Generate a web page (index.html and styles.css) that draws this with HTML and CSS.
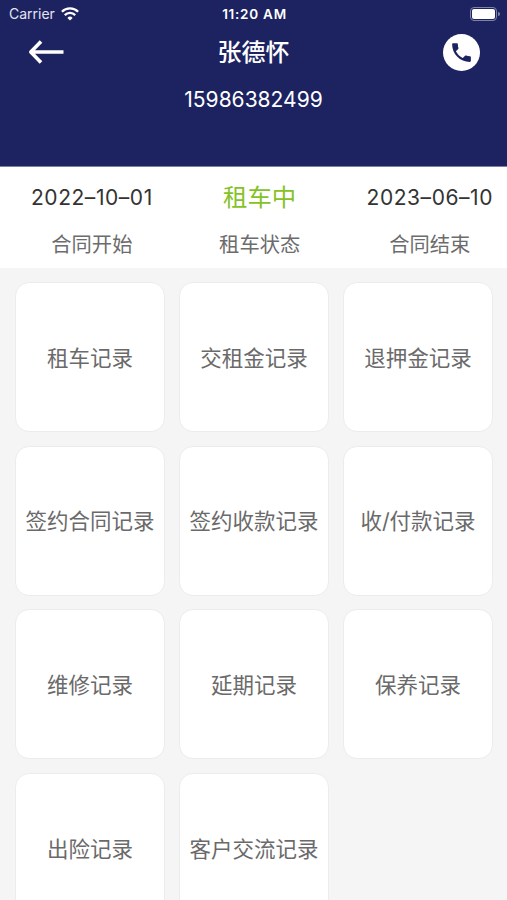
FILE: index.html
```html
<!DOCTYPE html>
<html lang="zh-CN">
<head>
  <meta charset="UTF-8" />
  <meta name="viewport" content="width=device-width, initial-scale=1" />
  <title>张德怀</title>
  <link rel="stylesheet" href="styles.css">
</head>
<body>
  <header class="header">
    <!-- Status bar -->
    <div class="status-bar">
      <div class="carrier">
        <span>Carrier</span>
        <svg class="wifi" viewBox="0 0 18 14" fill="none" stroke="#fff" stroke-width="2.3">
          <path d="M.9 4.800a11.500 11.500 0 0 1 16.200 0" />
          <path d="M3.800 8.100a7.300 7.300 0 0 1 10.400 0" />
          <path d="M9 13.500L6.400 10.900a3.700 3.700 0 0 1 5.200 0z" fill="#fff" stroke="none" />
        </svg>
      </div>
      <div class="time">11:20 AM</div>
      <div class="battery-wrap">
        <div class="battery"></div>
        <div class="battery-tip"></div>
      </div>
    </div>

    <div class="nav">
      <svg class="back" viewBox="0 0 36 26" fill="none" stroke="#fff" stroke-width="3.600">
        <path d="M35.500 13H3M13 2.500L2.800 13 13 23.500" stroke-linejoin="round" />
      </svg>
      <h1 class="name">张德怀</h1>
      <div class="call">
        <svg viewBox="0 0 24 24" fill="#1d2361">
          <path d="M6.620 10.790c1.440 2.830 3.760 5.140 6.590 6.590l2.200-2.200c.27-.27.67-.36 1.020-.24 1.120.37 2.330.57 3.570.57.55 0 1 .45 1 1V20c0 .55-.45 1-1 1-9.390 0-17-7.610-17-17 0-.55.45-1 1-1h3.500c.55 0 1 .45 1 1 0 1.250.2 2.450.57 3.570.11.35.03.74-.25 1.020l-2.200 2.200z" />
        </svg>
      </div>
    </div>
    <div class="phone">15986382499</div>
  </header>

  <!-- Contract info -->
  <section class="contract">
    <div class="item">
      <div class="value">2022–10–01</div>
      <div class="label">合同开始</div>
    </div>
    <div class="item">
      <div class="value status">租车中</div>
      <div class="label">租车状态</div>
    </div>
    <div class="item">
      <div class="value">2023–06–10</div>
      <div class="label">合同结束</div>
    </div>
  </section>

  <main class="grid">
    <div class="card">租车记录</div>
    <div class="card">交租金记录</div>
    <div class="card">退押金记录</div>
    <div class="card">签约合同记录</div>
    <div class="card">签约收款记录</div>
    <div class="card">收/付款记录</div>
    <div class="card">维修记录</div>
    <div class="card">延期记录</div>
    <div class="card">保养记录</div>
    <div class="card">出险记录</div>
    <div class="card">客户交流记录</div>
  </main>
</body>
</html>
```

FILE: styles.css
```css
* {
  box-sizing: border-box;
}

body {
  margin: 0;
  height: 900px;
  overflow: hidden;
  background: #f5f5f5;
  font-family: Inter, "Noto Sans CJK SC", sans-serif;
}

.header {
  height: 167px;
  border-bottom: 1px solid #7c80a8;
  background: #1d2361;
  color: #fff;
}

.status-bar {
  display: grid;
  grid-template-columns: 1fr auto 1fr;
  align-items: center;
  height: 27px;
  padding: 0 7px 0 9px;
  font-size: 14px;
}

.carrier {
  display: flex;
  align-items: center;
  gap: 6px;
  color: #e4e5f0;
}

.wifi {
  width: 18px;
  height: 14px;
}

.time {
  font-size: 13.5px;
  font-weight: 600;
  letter-spacing: 0.75px;
}

.battery-wrap {
  display: flex;
  align-items: center;
  justify-content: flex-end;
  gap: 1px;
}

.battery {
  width: 27px;
  height: 14px;
  border: 1px solid #8083a8;
  border-radius: 4px;
  padding: 1px;
  background: #fff content-box;
}

.battery-tip {
  width: 2px;
  height: 4px;
  border-radius: 0 2px 2px 0;
  background: #8083a8;
}

.nav {
  display: flex;
  align-items: center;
  justify-content: space-between;
  height: 50px;
  padding: 0 27px 0 28px;
}

.back {
  width: 36px;
  height: 26px;
}

.name {
  margin: -3px 0 0;
  font-size: 24px;
  font-weight: 500;
}

.call {
  display: flex;
  align-items: center;
  justify-content: center;
  width: 37px;
  height: 37px;
  border-radius: 50%;
  background: #fff;
}

.call svg {
  width: 25px;
  height: 25px;
}

.phone {
  margin-top: 9px;
  font-size: 21px;
  line-height: 28px;
  text-align: center;
}

.contract {
  display: flex;
  justify-content: space-between;
  height: 101px;
  padding: 12px 14px 0 31px;
  background: #fff;
  text-align: center;
}

.value {
  font-size: 21px;
  line-height: 37px;
  letter-spacing: 0.55px;
  color: #333;
}

.status {
  font-size: 24.4px;
  letter-spacing: 0;
  color: #85c226;
}

.label {
  margin-top: 11px;
  font-size: 20.3px;
  line-height: 36px;
  color: #6c6c6c;
}

.grid {
  display: grid;
  grid-template-columns: repeat(3, 150px);
  grid-auto-rows: 150px;
  gap: 13.7px 14px;
  padding: 14px 15px;
}

.card {
  display: flex;
  align-items: center;
  justify-content: center;
  padding-bottom: 2px;
  border: 1px solid #ececec;
  border-radius: 14px;
  background: #fff;
  font-size: 21.5px;
  color: #6a6a6a;
}
```
